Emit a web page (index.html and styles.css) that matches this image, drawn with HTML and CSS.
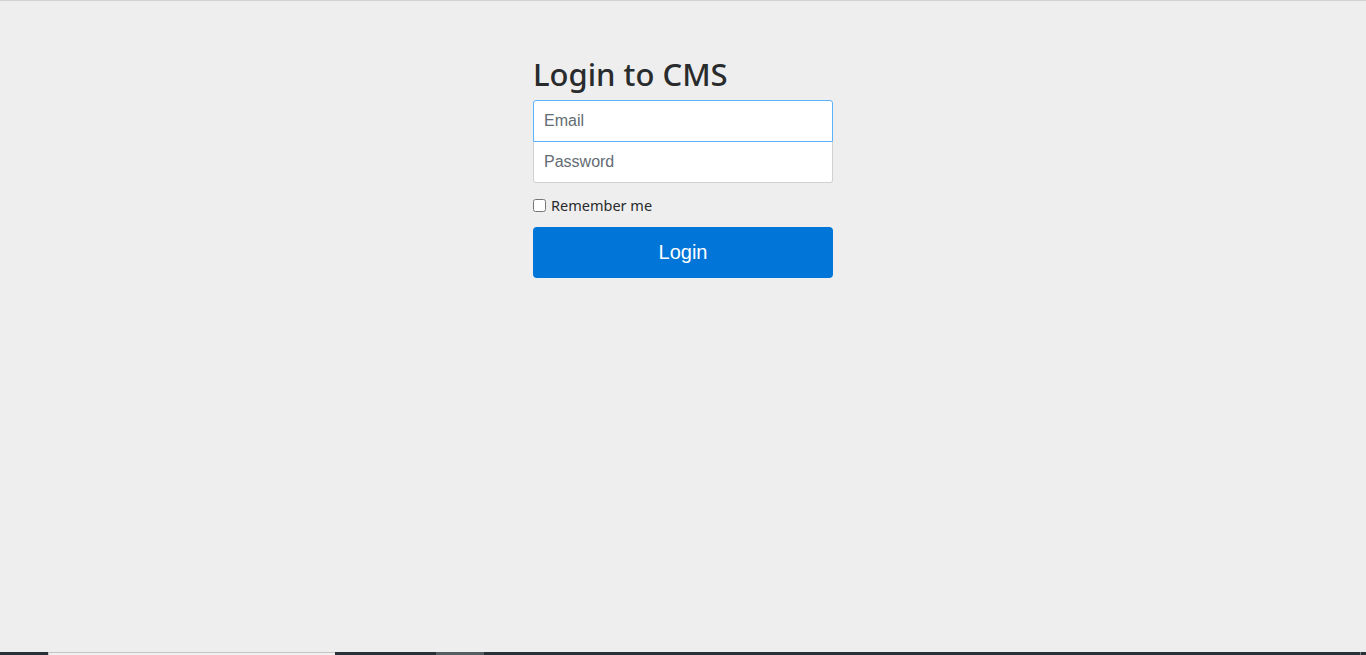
FILE: index.html
```html
<!DOCTYPE html>
<html lang="en">
<head>
<meta charset="utf-8">
<title>Login to CMS</title>
<link rel="stylesheet" href="styles.css">
</head>
<body>
  <div class="page">
    <form class="form-signin">
      <h2 class="form-signin-heading">Login to CMS</h2>
      <input class="form-control field-email" type="email" placeholder="Email" autofocus>
      <input class="form-control field-password" type="password" placeholder="Password">
      <label class="remember">
        <input type="checkbox" class="remember-box">
        <span>Remember me</span>
      </label>
      <button class="btn-login" type="button">Login</button>
    </form>
  </div>
  <div class="taskbar">
    <span class="tb-seg tb-dark tb-start"></span>
    <span class="tb-seg tb-light"></span>
    <span class="tb-seg tb-dark tb-mid"></span>
    <span class="tb-seg tb-grey"></span>
    <span class="tb-seg tb-dark tb-fill"></span>
    <span class="tb-seg tb-edge"></span>
  </div>
</body>
</html>
```

FILE: styles.css
```css
html, body {
  margin: 0;
  height: 100%;
}

body {
  background: #eeeeee;
  border-top: 1px solid #d3d3d3;
  box-sizing: border-box;
  color: #292b2c;
  font-family: "Noto Sans", "Open Sans", sans-serif;
  overflow: hidden;
}

.page {
  display: flex;
  justify-content: center;
  padding-top: 41px;
}

.form-signin {
  width: 300px;
  padding: 15px;
  display: flex;
  flex-direction: column;
}

.form-signin-heading {
  margin: 0 0 8px;
  font-size: 31px;
  font-weight: 500;
  line-height: 35px;
  letter-spacing: 0;
  color: #292b2c;
}

.form-control {
  display: block;
  box-sizing: border-box;
  width: 100%;
  height: 42px;
  margin: 0;
  padding: 10px 10px;
  font-family: "Liberation Sans", Arial, sans-serif;
  font-size: 16px;
  line-height: 20px;
  color: #464a4c;
  background: #ffffff;
  border: 1px solid rgba(0, 0, 0, 0.18);
  outline: none;
}

.form-control::placeholder {
  color: #636c72;
  opacity: 1;
}

.field-email {
  border-color: #5cb3fd;
  border-radius: 3px 3px 0 0;
  position: relative;
  z-index: 2;
}

.field-password {
  margin-top: -1px;
  border-radius: 0 0 3px 3px;
}

.remember {
  display: flex;
  align-items: center;
  gap: 5px;
  margin: 12px 0 12px;
  font-size: 14.5px;
  line-height: 20px;
  color: #292b2c;
}

.remember-box {
  margin: 0;
  width: 13px;
  height: 13px;
}

.btn-login {
  display: block;
  width: 100%;
  height: 51px;
  border: 0;
  border-radius: 4px;
  background: #0275d8;
  color: #ffffff;
  font-family: "Liberation Sans", Arial, sans-serif;
  font-size: 20px;
  line-height: 25px;
  cursor: pointer;
}

/* strip of the desktop taskbar along the bottom edge */
.taskbar {
  position: fixed;
  left: 0;
  right: 0;
  bottom: 0;
  height: 3px;
  display: flex;
}

.tb-seg {
  display: block;
  height: 3px;
}

.tb-dark { background: #263238; }
.tb-start { width: 48px; }
.tb-light {
  width: 287px;
  background: #f0f0f0;
  box-sizing: border-box;
  border-top: 1px solid #c4c4c4;
  border-left: 1px solid #c4c4c4;
}
.tb-mid { width: 101px; }
.tb-grey { width: 48px; background: #545d62; }
.tb-fill { flex: 1; }
.tb-edge { width: 5px; background: #263238; border-left: 1px solid #7a8185; }
```
